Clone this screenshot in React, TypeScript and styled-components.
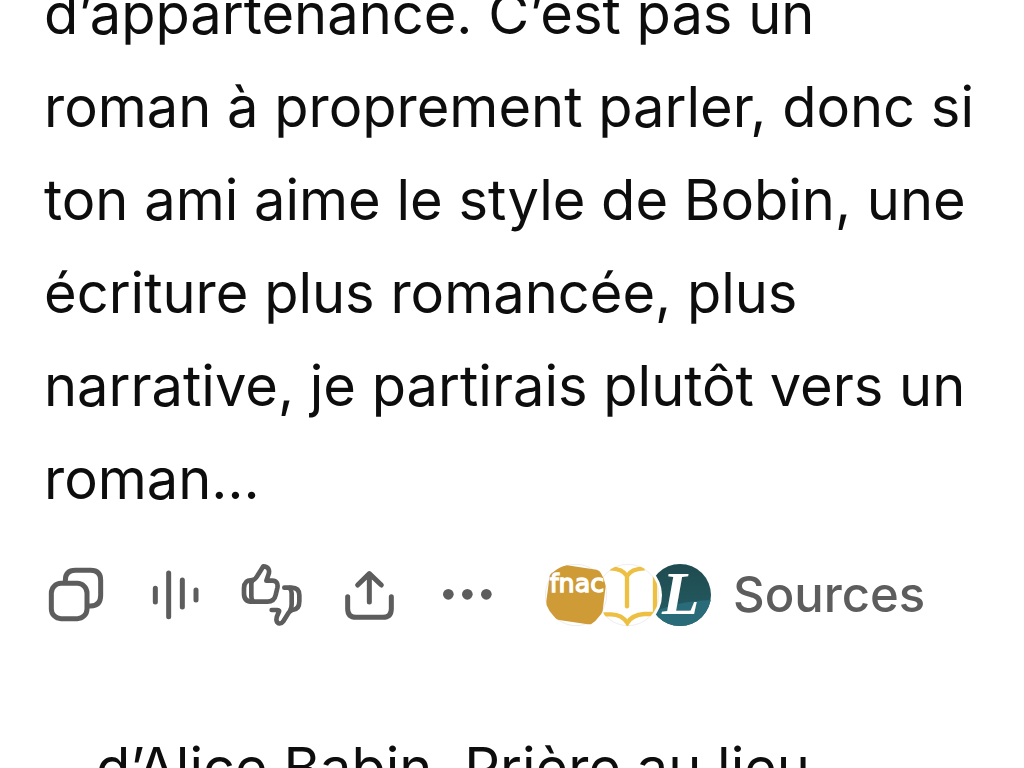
import React from "react";
import styled, { createGlobalStyle } from "styled-components";

const GlobalStyle = createGlobalStyle`
  * { box-sizing: border-box; }
  body { margin: 0; background: #fff; overflow: hidden; }
`;

const Viewport = styled.main`
  height: 100vh;
  overflow: hidden;
  background: #fff;
  color: #0d0d0d;
  font-family: Inter, "Liberation Sans", sans-serif;
`;

const Message = styled.article`
  margin-top: -32px;
  padding: 0 44px;
`;

const Paragraph = styled.p<{ $indent?: boolean }>`
  margin: 0;
  padding-left: ${(p) => (p.$indent ? 52 : 0)}px;
  font-size: 56px;
  line-height: 93px;
  white-space: nowrap;
`;

const Line = styled.span`
  display: block;
`;

const Toolbar = styled.div`
  display: flex;
  align-items: center;
  height: 64px;
  margin: 37px 0 95px;
  color: #5d5d5d;
`;

const Actions = styled.div`
  display: flex;
  gap: 34px;
`;

const IconButton = styled.button`
  display: grid;
  place-items: center;
  width: 64px;
  height: 64px;
  padding: 0;
  border: 0;
  background: none;
  color: inherit;
  cursor: pointer;
`;

const Icon = styled.svg`
  display: block;
  fill: none;
  stroke: currentColor;
  stroke-width: 15;
  stroke-linecap: round;
  stroke-linejoin: round;
`;

const SourcesButton = styled.button`
  display: flex;
  align-items: center;
  gap: 22px;
  margin-left: 45px;
  padding: 0;
  border: 0;
  background: none;
  color: inherit;
  font-family: inherit;
  font-size: 49px;
  font-weight: 500;
  line-height: 64px;
  cursor: pointer;
`;

const Logos = styled.span`
  display: flex;
`;

const Logo = styled.svg<{ $level: number }>`
  position: relative;
  z-index: ${(p) => p.$level};
  display: block;
  flex: none;
  & + & { margin-left: -10px; }
`;

const icons = [
  {
    label: "Copier",
    art: (
      <>
        <rect x="19" y="58" width="107" height="106" rx="29" />
        <path d="M61 55V49Q61 19 91 19H137Q167 19 167 49V94Q167 126 137 126H129" />
      </>
    ),
  },
  {
    label: "Lire à voix haute",
    art: <path strokeWidth="15" d="M37 73V114M77 27V158M118 48V129M159 78V108" />,
  },
  {
    label: "Donner un avis",
    art: (
      <g strokeWidth="14">
        <path d="M36 48H32C16 48 9 56 9 73V89C9 105 18 113 34 113H79C94 113 101 107 104 93L109 72C112 58 106 50 94 50H76L82 33C88 18 81 7 67 7L53 29C48 38 44 46 36 48Z" />
        <path d="M35 49Q30 54 31 64V96Q31 106 35 112" />
        <path d="M130 71H151C167 71 175 79 175 94V112C175 128 169 137 155 138C147 139 145 143 141 149L126 173C120 181 110 180 107 171C104 163 108 155 113 145Q117 138 109 138H92" />
        <path d="M146 72Q152 78 152 88V120Q152 131 148 138" />
      </g>
    ),
  },
  {
    label: "Partager",
    art: <path d="M91 114V30M56 63L91 29L127 63M26 98V134Q26 160 52 160H131Q157 160 157 134V98" />,
  },
  {
    label: "Plus",
    art: (
      <g fill="currentColor" stroke="none">
        <circle cx="34" cy="91" r="16" />
        <circle cx="91" cy="91" r="16" />
        <circle cx="148" cy="91" r="16" />
      </g>
    ),
  },
];

function FnacLogo() {
  return (
    <Logo $level={3} width="62" height="62" viewBox="0 0 186 186" aria-hidden="true">
      <circle cx="93" cy="93" r="92" fill="#fff" stroke="#ededed" strokeWidth="3" />
      <path fill="#cf9b36" d="M66 4L155 17Q164 19 168 28Q179 45 182 66L173 140Q170 150 163 157Q151 174 138 181L128 181L42 168Q33 166 28 158Q11 141 5 124L4 112L14 35Q17 28 25 24Q42 9 66 4Z" />
      <text x="14" y="84" fill="#fff" stroke="#fff" strokeWidth="4" fontFamily="DejaVu Sans, sans-serif" fontSize="76">fnac</text>
    </Logo>
  );
}

function BookLogo() {
  return (
    <Logo $level={2} width="62" height="62" viewBox="0 0 186 186" overflow="visible" aria-hidden="true">
      <clipPath id="bookClip"><circle cx="93" cy="93" r="93" /></clipPath>
      <circle cx="93" cy="93" r="102" fill="#fff" />
      <circle cx="93" cy="93" r="92" fill="#fff" stroke="#eee" strokeWidth="3" />
      <g clipPath="url(#bookClip)" fill="none" stroke="#edc044" strokeWidth="13">
        <path d="M39 13Q77 14 90 36Q103 14 143 13" />
        <path d="M90 34V127" strokeLinecap="round" />
        <path d="M174 30V150H142Q104 153 91 177Q76 152 42 151H20" />
      </g>
    </Logo>
  );
}

function LetterLogo() {
  return (
    <Logo $level={1} width="62" height="62" viewBox="0 0 186 186" aria-hidden="true">
      <defs>
        <linearGradient id="teal" x1="0" y1="0" x2="0" y2="1">
          <stop offset="0" stopColor="#1f4b4f" />
          <stop offset="1" stopColor="#245d66" />
        </linearGradient>
        <clipPath id="letterClip"><circle cx="93" cy="93" r="93" /></clipPath>
      </defs>
      <g clipPath="url(#letterClip)">
        <rect width="186" height="186" fill="url(#teal)" />
        <path d="M0 151Q70 113 186 108V186H0Z" fill="#2a6b79" />
        <text x="39" y="151" fill="#fff" fontFamily="Liberation Serif, serif" fontStyle="italic" fontWeight="700" fontSize="184">L</text>
      </g>
    </Logo>
  );
}

export default function App() {
  return (
    <>
      <GlobalStyle />
      <Viewport>
        <Message>
          <Paragraph>
            <Line>d’appartenance. C’est pas un</Line>
            <Line>roman à proprement parler, donc si</Line>
            <Line>ton ami aime le style de Bobin, une</Line>
            <Line>écriture plus romancée, plus</Line>
            <Line>narrative, je partirais plutôt vers un</Line>
            <Line>roman…</Line>
          </Paragraph>
          <Toolbar>
            <Actions>
              {icons.map(({ label, art }) => (
                <IconButton key={label} type="button" aria-label={label}>
                  <Icon width="62" height="62" viewBox="0 0 186 186" aria-hidden="true">{art}</Icon>
                </IconButton>
              ))}
            </Actions>
            <SourcesButton type="button">
              <Logos>
                <FnacLogo />
                <BookLogo />
                <LetterLogo />
              </Logos>
              Sources
            </SourcesButton>
          </Toolbar>
          <Paragraph $indent>d’Alice Babin. Prière au lieu</Paragraph>
        </Message>
      </Viewport>
    </>
  );
}
